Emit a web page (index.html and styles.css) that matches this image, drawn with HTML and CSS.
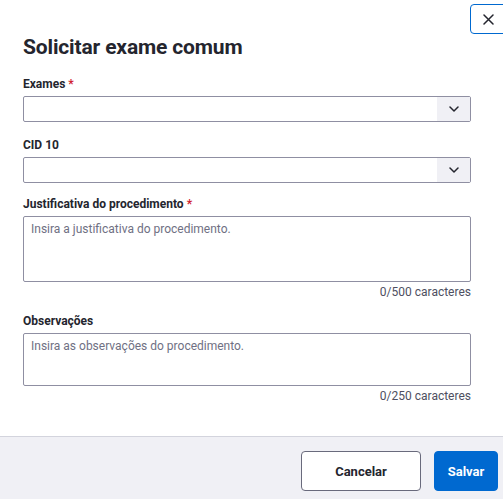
FILE: index.html
```html
<!DOCTYPE html>
<html lang="pt-BR">
<head>
<meta charset="utf-8">
<title>Solicitar exame comum</title>
<link rel="stylesheet" href="styles.css">
</head>
<body>
<div class="modal">
  <button class="close" aria-label="Fechar">
    <svg width="11" height="11" viewBox="0 0 11 11"><path d="M1 1 L10 10 M10 1 L1 10" stroke="#24252e" stroke-width="1.5" fill="none" stroke-linecap="round"/></svg>
  </button>
  <div class="body">
    <h1 class="title">Solicitar exame comum</h1>
    <div class="field f-exames">
      <label class="label">Exames <span class="req">*</span></label>
      <div class="select">
        <div class="select-input"></div>
        <div class="select-btn"><svg width="10" height="6" viewBox="0 0 10 6"><path d="M1 1 L5 5 L9 1" stroke="#24252e" stroke-width="1.5" fill="none" stroke-linecap="round" stroke-linejoin="round"/></svg></div>
      </div>
    </div>
    <div class="field f-cid">
      <label class="label">CID 10</label>
      <div class="select">
        <div class="select-input"></div>
        <div class="select-btn"><svg width="10" height="6" viewBox="0 0 10 6"><path d="M1 1 L5 5 L9 1" stroke="#24252e" stroke-width="1.5" fill="none" stroke-linecap="round" stroke-linejoin="round"/></svg></div>
      </div>
    </div>
    <div class="field f-just">
      <label class="label">Justificativa do procedimento <span class="req">*</span></label>
      <div class="textarea ta-just">Insira a justificativa do procedimento.</div>
      <div class="counter">0/500 caracteres</div>
    </div>
    <div class="field f-obs">
      <label class="label">Observações</label>
      <div class="textarea ta-obs">Insira as observações do procedimento.</div>
      <div class="counter">0/250 caracteres</div>
    </div>
  </div>
  <div class="footer">
    <button class="btn btn-cancel">Cancelar</button>
    <button class="btn btn-save">Salvar</button>
  </div>
</div>
</body>
</html>
```
FILE: styles.css
```css
* { box-sizing: border-box; }
html, body { margin: 0; padding: 0; background: #fff; }
body {
  font-family: Roboto, "Noto Sans", sans-serif;
  color: #24252e;
  overflow: hidden;
  height: 499px;
}
.modal { position: relative; width: 503px; }
.close {
  position: absolute;
  left: 470px;
  top: 4px;
  width: 37px;
  height: 30px;
  border: 1px solid #0069d0;
  border-radius: 4px;
  background: #fff;
  display: flex;
  align-items: center;
  justify-content: flex-start;
  padding: 0 0 0 12px;
}
.body { padding: 33px 32px 0 23px; }
.title {
  margin: 0;
  font-size: 21px;
  line-height: 28px;
  font-weight: 700;
  letter-spacing: -0.15px;
  color: #24252e;
}
.field { display: flex; flex-direction: column; }
.f-exames { margin-top: 15px; }
.f-cid { margin-top: 15px; }
.f-just { margin-top: 13px; }
.f-obs { margin-top: 13px; }
.label {
  font-size: 12px;
  line-height: 16px;
  font-weight: 700;
  color: #24252e;
  margin-bottom: 4px;
}
.req { color: #d01e2f; }
.select {
  display: flex;
  height: 26px;
  border: 1px solid #8f8fa2;
  border-radius: 2px;
  background: #fff;
}
.select-input { flex: 1; }
.select-btn {
  width: 33px;
  background: #f0f0f5;
  display: flex;
  align-items: center;
  justify-content: center;
}
.textarea {
  border: 1px solid #8f8fa2;
  border-radius: 2px;
  padding: 4px 7px;
  font-size: 12px;
  line-height: 16px;
  color: #6f7083;
}
.ta-just { height: 66px; }
.ta-obs { height: 53px; }
.counter {
  text-align: right;
  font-size: 12px;
  line-height: 16px;
  color: #4e4f61;
  margin-top: 2px;
}
.footer {
  margin-top: 32px;
  border-top: 1px solid #d3d4dd;
  background: #f0f0f5;
  height: 80px;
  display: flex;
  justify-content: flex-end;
  align-items: flex-start;
  gap: 13px;
  padding: 14px 5px 0 0;
}
.btn {
  height: 40px;
  border-radius: 4px;
  font-family: inherit;
  font-size: 13px;
  font-weight: 700;
  cursor: pointer;
}
.btn-cancel {
  width: 120px;
  background: #fff;
  border: 1px solid #696a7c;
  color: #24252e;
}
.btn-save {
  width: 64px;
  background: #0069d0;
  border: 1px solid #0069d0;
  color: #fff;
}
```
